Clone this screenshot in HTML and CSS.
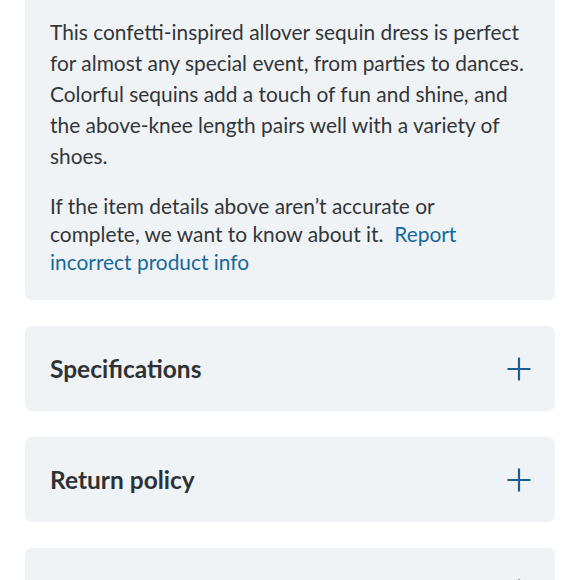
FILE: index.html
```html
<!DOCTYPE html>
<html>
<head>
<meta charset="utf-8">
<link rel="stylesheet" href="styles.css">
</head>
<body>
<div class="page">
  <section class="card desc">
    <p class="p1">This confetti-inspired allover sequin dress is perfect<br>for almost any special event, from parties to dances.<br>Colorful sequins add a touch of fun and shine, and<br>the above-knee length pairs well with a variety of<br>shoes.</p>
    <p class="p2">If the item details above aren’t accurate or<br>complete, we want to know about it. &nbsp;<a class="link" href="#">Report<br>incorrect product info</a></p>
  </section>
  <section class="card acc">
    <h2 class="acc-title">Specifications</h2>
    <svg class="plus" width="24" height="24" viewBox="0 0 24 24"><path d="M12 0.5v23M0.5 12h23" stroke="#1b5f95" stroke-width="2.2" fill="none"/></svg>
  </section>
  <section class="card acc">
    <h2 class="acc-title">Return policy</h2>
    <svg class="plus" width="24" height="24" viewBox="0 0 24 24"><path d="M12 0.5v23M0.5 12h23" stroke="#1b5f95" stroke-width="2.2" fill="none"/></svg>
  </section>
  <section class="card acc acc-last">
    <span class="acc-title"></span>
    <svg class="plus" width="24" height="24" viewBox="0 0 24 24"><path d="M12 0.5v23M0.5 12h23" stroke="#1b5f95" stroke-width="2.2" fill="none"/></svg>
  </section>
</div>
</body>
</html>
```
FILE: styles.css
```css
html, body {
  margin: 0;
  padding: 0;
  background: #ffffff;
  overflow: hidden;
}
.page {
  display: flex;
  flex-direction: column;
  gap: 26px;
  padding: 0 25px;
  font-family: Lato, "Open Sans", sans-serif;
  color: #333638;
  height: 580px;
  overflow: hidden;
}
.card {
  background: #eff3f6;
  border-radius: 7px;
  flex-shrink: 0;
}
.desc {
  border-top-left-radius: 0;
  border-top-right-radius: 0;
  padding: 16px 20px 24px 25px;
}
.p1 {
  margin: 0 0 21px 0;
  font-size: 20.9px;
  line-height: 31px;
  white-space: nowrap;
}
.p2 {
  margin: 0;
  font-size: 20.9px;
  line-height: 28px;
  white-space: nowrap;
}
.link {
  color: #17699b;
  text-decoration: none;
}
.acc {
  height: 85px;
  display: flex;
  align-items: center;
  justify-content: space-between;
  padding: 0 24px 0 25px;
}
.acc-title {
  margin: 0;
  font-size: 24.5px;
  font-weight: 700;
  color: #2f3234;
}
.plus {
  display: block;
}
```
